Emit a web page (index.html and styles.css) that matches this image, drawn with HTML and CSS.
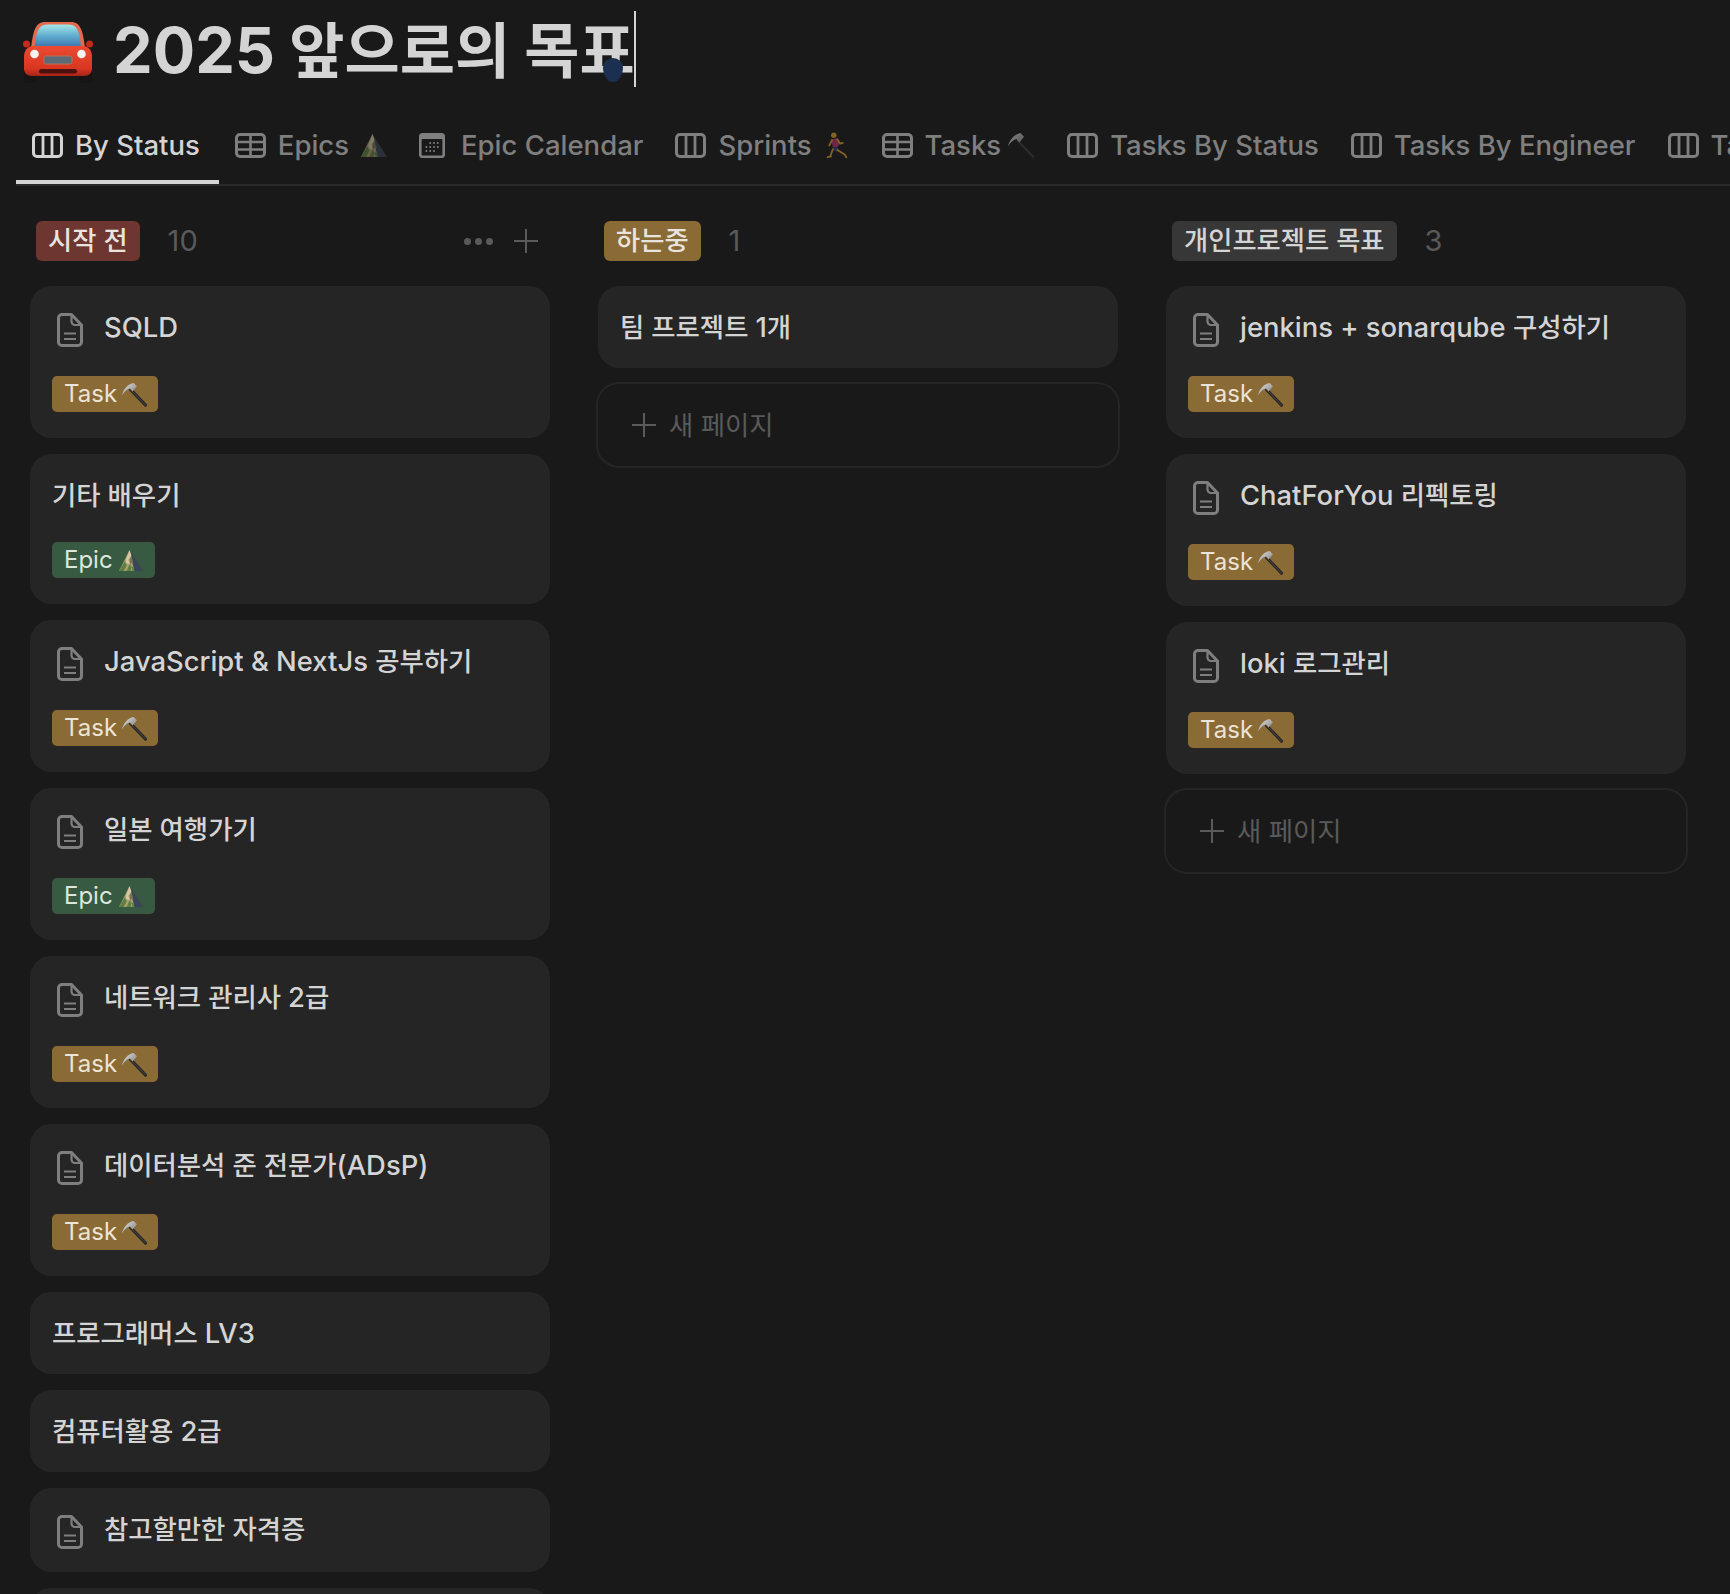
FILE: index.html
```html
<!DOCTYPE html>
<html lang="ko">
<head>
<meta charset="utf-8">
<title>2025 앞으로의 목표</title>
<link rel="stylesheet" href="styles.css">
</head>
<body>
<svg class="sprite" aria-hidden="true">
  <defs>
    <linearGradient id="glass" x1="0" y1="0" x2="0" y2="1"><stop offset="0" stop-color="#a4e6e8"/><stop offset=".5" stop-color="#62aecf"/><stop offset="1" stop-color="#3a74ad"/></linearGradient>
    <linearGradient id="paint" x1="0" y1="0" x2="0" y2="1"><stop offset="0" stop-color="#ec4a32"/><stop offset=".75" stop-color="#d8361f"/><stop offset="1" stop-color="#a8231a"/></linearGradient>
    <linearGradient id="metal" x1="0" y1="0" x2="1" y2="1"><stop offset="0" stop-color="#e2e2e2"/><stop offset="1" stop-color="#7c7c7c"/></linearGradient>
    <symbol id="board" viewBox="0 0 31 25"><rect x="1.500" y="1.500" width="28" height="22" rx="3.500" fill="none" stroke="currentColor" stroke-width="3"/><path d="M11 1.500v22M20 1.500v22" stroke="currentColor" stroke-width="2.800" fill="none"/></symbol>
    <symbol id="table" viewBox="0 0 31 25"><rect x="1.500" y="1.500" width="28" height="22" rx="3.500" fill="none" stroke="currentColor" stroke-width="3"/><path d="M1.500 9h28M1.500 16.500h28M15.500 1.500v22" stroke="currentColor" stroke-width="2.600" fill="none"/></symbol>
    <symbol id="calendar" viewBox="0 0 26 25"><rect width="26" height="25" rx="3.500" fill="currentColor"/><rect x="2.600" y="6" width="20.800" height="16.400" rx="1.200" fill="#191919"/><g fill="currentColor"><circle cx="11.200" cy="10" r="1"/><circle cx="15" cy="10" r="1"/><circle cx="18.800" cy="10" r="1"/><circle cx="7.400" cy="14" r="1"/><circle cx="11.200" cy="14" r="1"/><circle cx="15" cy="14" r="1"/><circle cx="18.800" cy="14" r="1"/><circle cx="7.400" cy="18" r="1"/><circle cx="11.200" cy="18" r="1"/><circle cx="15" cy="18" r="1"/></g></symbol>
    <symbol id="doc" viewBox="0 0 26 34"><path d="M5 1.500h9.500L24.500 12v17a3.500 3.500 0 0 1-3.500 3.500H5A3.500 3.500 0 0 1 1.500 29V5A3.500 3.500 0 0 1 5 1.500z" fill="none" stroke="currentColor" stroke-width="3" stroke-linejoin="round"/><path d="M14.500 1.500v7a3.500 3.500 0 0 0 3.500 3.500h6.500M7 20.500h12M7 26h12" fill="none" stroke="currentColor" stroke-width="2.200"/></symbol>
    <symbol id="hammer" viewBox="0 0 26 26"><path d="M9 8l15.500 16" stroke="#262626" stroke-width="3.200" stroke-linecap="round"/><path d="M9 8l15.500 16" stroke="#4a4a4a" stroke-width="1" stroke-linecap="round"/><path d="M0 14C1 8 6 2 12 1l3.500 3.500-4.500 5.500-2.800-3.200C5 8 2 10 0 14z" fill="url(#metal)"/></symbol>
    <symbol id="mountain" viewBox="0 0 26 24"><path d="M12 1L26 23H12z" fill="#3a4658"/><path d="M12 1L1 23h16z" fill="#a8a074"/><path d="M1 23l6-10 2 4-3 6zM9 23l3-7 2 3-1 4zM15 23l-1-5 2 1 1 4z" fill="#5f8040"/><path d="M12 1l2 6-3 4 1 5-3-1-1-3z" fill="#d6c9a4"/><path d="M14 7l2 8-2-1-1 3-1-6z" fill="#7c7350"/></symbol>
    <symbol id="runner" viewBox="0 0 24 30"><circle cx="9" cy="3.500" r="3" fill="#d8a02a"/><path d="M6 8l7-1 2 6-2 4-5 0z" fill="#b8336a"/><path d="M8 17h5l2 3-3 2-4-2z" fill="#2c3f8a"/><path d="M8 19L5 27M2 28l4-1M13 20l8 5M21 25l2 3M7 9L4 15M13 8l3 5 3-1" stroke="#d8a02a" stroke-width="2" fill="none" stroke-linecap="round"/></symbol>
    <symbol id="car" viewBox="0 0 70 61">
      <rect x="1" y="48" width="13" height="13" rx="4" fill="#191414"/><rect x="56" y="48" width="13" height="13" rx="4" fill="#191414"/>
      <circle cx="3.500" cy="22" r="3.500" fill="#c62a1d"/><circle cx="66.500" cy="22" r="3.500" fill="#c62a1d"/>
      <path d="M8 26C10 10 12 0 22 0h26c10 0 12 10 14 26z" fill="#e4694e"/>
      <path d="M11.500 25C13 11 15 2.500 24 2.500h22c9 0 10.500 8.500 12 22.500z" fill="url(#glass)"/>
      <path d="M10 24h50c6 0 9 5 9 11v11c0 5-3 8-8 8H9c-5 0-8-3-8-8V35c0-6 3-11 9-11z" fill="url(#paint)"/>
      <circle cx="11.500" cy="32" r="4.300" fill="#f4f4f0"/><circle cx="58.500" cy="32" r="4.300" fill="#f4f4f0"/>
      <rect x="21" y="34" width="28" height="8" rx="1.500" fill="#5b6a74" stroke="#b8715f"/>
      <rect x="16" y="47" width="38" height="4.500" rx="2.200" fill="#4a120e"/>
    </symbol>
  </defs>
</svg>

<header class="page-head">
  <svg class="car"><use href="#car"/></svg>
  <h1 class="title"><span><span class="num">2025</span> 앞으로의 목표</span><span class="caret"></span><span class="blob"></span></h1>
</header>

<nav class="tabs">
  <a class="tab active"><svg class="ti"><use href="#board"/></svg>By Status</a>
  <a class="tab"><svg class="ti"><use href="#table"/></svg>Epics<svg class="te wide"><use href="#mountain"/></svg></a>
  <a class="tab"><svg class="ti cal"><use href="#calendar"/></svg>Epic Calendar</a>
  <a class="tab"><svg class="ti"><use href="#board"/></svg>Sprints<svg class="te wide"><use href="#runner"/></svg></a>
  <a class="tab"><svg class="ti"><use href="#table"/></svg>Tasks<svg class="te"><use href="#hammer"/></svg></a>
  <a class="tab"><svg class="ti"><use href="#board"/></svg>Tasks By Status</a>
  <a class="tab"><svg class="ti"><use href="#board"/></svg>Tasks By Engineer</a>
  <a class="tab"><svg class="ti"><use href="#board"/></svg>Tasks</a>
</nav>

<main class="board">
  <section class="col">
    <div class="col-head"><span class="status red">시작 전</span><span class="count">10</span>
      <span class="actions"><span class="dots"><i></i><i></i><i></i></span><span class="plus"></span></span></div>
    <article class="card"><div class="row"><svg class="doc"><use href="#doc"/></svg><span class="name">SQLD</span></div><span class="tag task">Task<svg class="em"><use href="#hammer"/></svg></span></article>
    <article class="card"><div class="row plain"><span class="name ko">기타 배우기</span></div><span class="tag epic">Epic<svg class="em"><use href="#mountain"/></svg></span></article>
    <article class="card"><div class="row"><svg class="doc"><use href="#doc"/></svg><span class="name">JavaScript &amp; NextJs <span class="ko">공부하기</span></span></div><span class="tag task">Task<svg class="em"><use href="#hammer"/></svg></span></article>
    <article class="card"><div class="row"><svg class="doc"><use href="#doc"/></svg><span class="name ko">일본 여행가기</span></div><span class="tag epic">Epic<svg class="em"><use href="#mountain"/></svg></span></article>
    <article class="card"><div class="row"><svg class="doc"><use href="#doc"/></svg><span class="name"><span class="ko">네트워크 관리사 </span>2<span class="ko">급</span></span></div><span class="tag task">Task<svg class="em"><use href="#hammer"/></svg></span></article>
    <article class="card"><div class="row"><svg class="doc"><use href="#doc"/></svg><span class="name"><span class="ko">데이터분석 준 전문가</span>(ADsP)</span></div><span class="tag task">Task<svg class="em"><use href="#hammer"/></svg></span></article>
    <article class="card short"><div class="row plain"><span class="name"><span class="ko">프로그래머스 </span>LV3</span></div></article>
    <article class="card short"><div class="row plain"><span class="name"><span class="ko">컴퓨터활용 </span>2<span class="ko">급</span></span></div></article>
    <article class="card short"><div class="row"><svg class="doc"><use href="#doc"/></svg><span class="name ko">참고할만한 자격증</span></div></article>
    <article class="card short"><div class="row plain"></div></article>
  </section>

  <section class="col">
    <div class="col-head"><span class="status brown">하는중</span><span class="count">1</span></div>
    <article class="card short"><div class="row plain"><span class="name"><span class="ko">팀 프로젝트 </span>1<span class="ko">개</span></span></div></article>
    <a class="new"><span class="plus"></span><span class="new-label">새 페이지</span></a>
  </section>

  <section class="col">
    <div class="col-head"><span class="status grey">개인프로젝트 목표</span><span class="count">3</span></div>
    <article class="card"><div class="row"><svg class="doc"><use href="#doc"/></svg><span class="name">jenkins + sonarqube <span class="ko">구성하기</span></span></div><span class="tag task">Task<svg class="em"><use href="#hammer"/></svg></span></article>
    <article class="card"><div class="row"><svg class="doc"><use href="#doc"/></svg><span class="name">ChatForYou <span class="ko">리펙토링</span></span></div><span class="tag task">Task<svg class="em"><use href="#hammer"/></svg></span></article>
    <article class="card"><div class="row"><svg class="doc"><use href="#doc"/></svg><span class="name">loki <span class="ko">로그관리</span></span></div><span class="tag task">Task<svg class="em"><use href="#hammer"/></svg></span></article>
    <a class="new"><span class="plus"></span><span class="new-label">새 페이지</span></a>
  </section>
</main>
</body>
</html>
```
FILE: styles.css
```css
* { box-sizing: border-box; }
html, body { margin: 0; height: 1594px; overflow: hidden; background: #191919; }
body { font-family: Inter, "Noto Sans CJK KR", sans-serif; color: #d4d4d4; }
.sprite { position: absolute; width: 0; height: 0; }

.page-head { height: 110px; padding-left: 23px; display: flex; align-items: flex-start; }
.car { width: 70px; height: 61px; margin-top: 22px; flex: none; }
.title { margin: 11px 0 0 20px; height: 76px; font-size: 60px; line-height: 78px; font-weight: 700; color: #d4d4d4; position: relative; display: flex; white-space: nowrap; }
.num { font-size: 63px; }
.caret { width: 2px; height: 76px; background: #d4d4d4; margin-left: -1px; }
.blob { position: absolute; right: 13px; top: 47px; width: 20px; height: 24px; border-radius: 50% 50% 50% 50% / 40% 40% 60% 60%; background: #1b3050; }

.tabs { margin-left: 16px; display: flex; border-bottom: 2px solid #2a2a2a; overflow: hidden; height: 76px; }
.tab { flex: none; height: 74px; padding: 0 16px; display: flex; align-items: center; font-size: 27.500px; font-weight: 500; color: #7f7f7f; border-bottom: 4px solid transparent; white-space: nowrap; }
.tab.active { color: #d4d4d4; border-bottom-color: #d4d4d4; padding-right: 19px; }
.ti { width: 31px; height: 25px; margin-right: 12px; flex: none; }
.ti.cal { width: 26px; margin-right: 16px; }
.te { width: 27px; height: 27px; margin-left: 7px; opacity: .55; flex: none; }
.te.wide { margin-left: 11px; }

.board { display: flex; gap: 48px; padding: 35px 0 0 30px; align-items: flex-start; }
.col { width: 520px; flex: none; display: flex; flex-direction: column; gap: 16px; }
.col-head { height: 40px; padding: 0 12px 0 6px; margin-bottom: 9px; display: flex; align-items: center; }
.status { height: 40px; padding: 0 12px; border-radius: 6px; font-size: 26.300px; line-height: 40px; font-weight: 500; color: #e9e4df; white-space: nowrap; }
.status.red { background: #6e3630; }
.status.brown { background: #8a6a35; }
.status.grey { background: #373737; color: #d4d4d4; }
.count { margin: -2px 0 0 28px; font-size: 29px; color: #5a5a5a; }
.actions { margin-left: auto; display: flex; align-items: center; gap: 21px; }
.dots { display: flex; gap: 4px; }
.dots i { width: 7px; height: 7px; border-radius: 50%; background: #5a5a5a; }
.plus { width: 24px; height: 24px; flex: none; background: linear-gradient(#5a5a5a, #5a5a5a) center / 100% 2px no-repeat, linear-gradient(#5a5a5a, #5a5a5a) center / 2px 100% no-repeat; }

.card { background: #252525; border-radius: 21px; padding: 20px 22px 26px; height: 152px; }
.card:has(.plain) { height: 150px; }
.card.short { height: 84px; padding-bottom: 20px; }
.card.short:has(.plain) { height: 82px; }
.row { height: 44px; display: flex; margin-bottom: 26px; }
.row.plain { height: 42px; align-items: center; }
.doc { width: 26px; height: 34px; margin: 7px 21px 0 5px; color: #7f7f7f; flex: none; }
.name { font-size: 27.400px; line-height: 42px; font-weight: 500; color: #d4d4d4; white-space: nowrap; }
.ko { font-size: 26.400px; }

.tag { display: inline-flex; align-items: center; height: 36px; padding: 0 11px 0 12px; border-radius: 5px; font-size: 24px; line-height: 34px; color: #ece4d6; }
.tag.task { background: #8a6a35; }
.tag.epic { background: #385a42; color: #dbe6de; padding-right: 12px; }
.em { width: 25px; height: 25px; margin-left: 5px; flex: none; }

.new { margin: -2px -2px 0; height: 86px; border: 2px solid #252525; border-radius: 23px; padding-left: 34px; display: flex; align-items: center; gap: 13px; font-size: 26.400px; color: #5a5a5a; }
.new-label { line-height: 1; }
```
